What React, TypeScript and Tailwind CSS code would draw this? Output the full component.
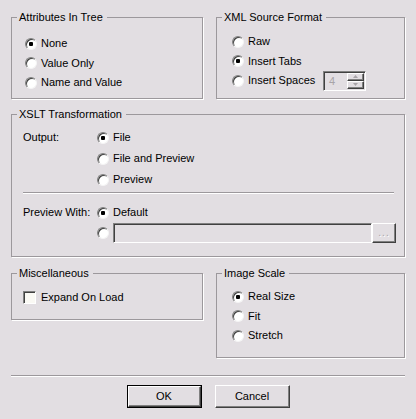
import type { ReactNode } from "react";

const face = "bg-[#e2dee2]";

function Group({
  title,
  className,
  children,
}: {
  title: string;
  className: string;
  children: ReactNode;
}) {
  return (
    <fieldset className={`border border-[#9c989c] shadow-[1px_1px_0_#ffffff] ${className}`}>
      <legend className="ml-[5px] pl-[2px] pr-[4px] leading-[13px]">{title}</legend>
      {children}
    </fieldset>
  );
}

function RadioDot({ checked }: { checked?: boolean }) {
  return (
    <span className="flex h-[12px] w-[12px] shrink-0 items-center justify-center rounded-full border border-t-[#808080] border-l-[#808080] border-r-[#f4f4f4] border-b-[#f4f4f4] bg-white shadow-[inset_1px_1px_0_#404040]">
      {checked && <span className="h-[4px] w-[4px] rounded-[1px] bg-black" />}
    </span>
  );
}

function Radio({ label, checked, h = "h-[19.5px]" }: { label: string; checked?: boolean; h?: string }) {
  return (
    <div className={`flex items-center ${h}`}>
      <RadioDot checked={checked} />
      <span className="ml-[4px]">{label}</span>
    </div>
  );
}

const raised =
  "border border-t-white border-l-white border-r-[#404040] border-b-[#404040] shadow-[inset_-1px_-1px_0_#808080]";
const sunken =
  "border border-t-[#808080] border-l-[#808080] border-r-white border-b-white shadow-[inset_1px_1px_0_#404040]";

function SpinBox() {
  return (
    <div className={`flex h-[20px] w-[43px] ${sunken}`}>
      <span className="flex-1 pl-[5px] leading-[18px] text-[#a8a4a8]">4</span>
      <div className="flex w-[18px] flex-col py-[1px] pr-[1px]">
        <div className={`flex flex-1 items-center justify-center ${raised}`}>
          <svg width="5" height="3" viewBox="0 0 5 3">
            <path d="M2.5 0 L5 3 L0 3 Z" fill="#a8a4a8" />
          </svg>
        </div>
        <div className={`flex flex-1 items-center justify-center ${raised}`}>
          <svg width="5" height="3" viewBox="0 0 5 3">
            <path d="M0 0 L5 0 L2.5 3 Z" fill="#a8a4a8" />
          </svg>
        </div>
      </div>
    </div>
  );
}

export default function App() {
  return (
    <div
      className={`h-[419px] w-[416px] overflow-hidden ${face} text-[11px] leading-[13px] text-black font-['Liberation_Sans',Arial,sans-serif]`}
    >
      <div className="flex gap-[13px] px-[11px] pt-[11px]">
        <Group title="Attributes In Tree" className="h-[88px] w-[192px]">
          <div className="pl-[13px] pt-[10px]">
            <Radio label="None" checked />
            <Radio label="Value Only" />
            <Radio label="Name and Value" />
          </div>
        </Group>
        <Group title="XML Source Format" className="h-[88px] w-[189px]">
          <div className="pl-[15px] pt-[8px]">
            <Radio label="Raw" />
            <Radio label="Insert Tabs" checked />
            <div className="flex h-[19.5px] items-center">
              <RadioDot />
              <span className="ml-[4px] w-[75px]">Insert Spaces</span>
              <SpinBox />
            </div>
          </div>
        </Group>
      </div>

      <div className="px-[11px] pt-[9px]">
        <Group title="XSLT Transformation" className="h-[149px] w-[394px]">
          <div className="pl-[11px] pr-[8px] pt-[6px]">
            <div className="flex h-[21px] items-center">
              <span className="w-[74px]">Output:</span>
              <RadioDot checked />
              <span className="ml-[4px]">File</span>
            </div>
            <div className="pl-[74px]">
              <Radio label="File and Preview" h="h-[21px]" />
              <Radio label="Preview" h="h-[21px]" />
            </div>
            <div className="mr-[2px] mt-[2px] h-[2px] border-t border-b border-t-[#9c989c] border-b-white" />
            <div className="mt-[8px] flex h-[21px] items-center">
              <span className="w-[74px]">Preview With:</span>
              <RadioDot checked />
              <span className="ml-[4px]">Default</span>
            </div>
            <div className="flex h-[20px] items-center pl-[74px]">
              <RadioDot />
              <div className={`ml-[4px] h-[20px] flex-1 ${sunken}`} />
              <div className={`flex h-[20px] w-[24px] items-center justify-center ${raised}`}>
                <span className="pb-[2px] text-[10px] tracking-[1px] text-[#a8a4a8] [text-shadow:1px_1px_0_#fff]">...</span>
              </div>
            </div>
          </div>
        </Group>
      </div>

      <div className="flex items-start gap-[13px] px-[11px] pt-[10px]">
        <Group title="Miscellaneous" className="h-[53px] w-[192px]">
          <div className="flex h-[20px] items-center pl-[11px] mt-[7px]">
            <span className="h-[13px] w-[13px] shrink-0 border border-t-[#808080] border-l-[#808080] border-r-white border-b-white bg-[#faf9f4] shadow-[inset_1px_1px_0_#404040]" />
            <span className="ml-[5px]">Expand On Load</span>
          </div>
        </Group>
        <Group title="Image Scale" className="h-[91px] w-[189px]">
          <div className="pl-[15px] pt-[7px]">
            <Radio label="Real Size" checked />
            <Radio label="Fit" />
            <Radio label="Stretch" />
          </div>
        </Group>
      </div>

      <div className="mx-[11px] mt-[17px] h-[2px] border-t border-b border-t-[#9c989c] border-b-white" />

      <div className="mt-[8px] flex justify-center gap-[13px]">
        <div className="h-[23px] w-[75px] border border-black">
          <button className={`h-full w-full ${raised} ${face}`}>OK</button>
        </div>
        <button className={`h-[23px] w-[75px] ${raised} ${face}`}>Cancel</button>
      </div>
    </div>
  );
}
